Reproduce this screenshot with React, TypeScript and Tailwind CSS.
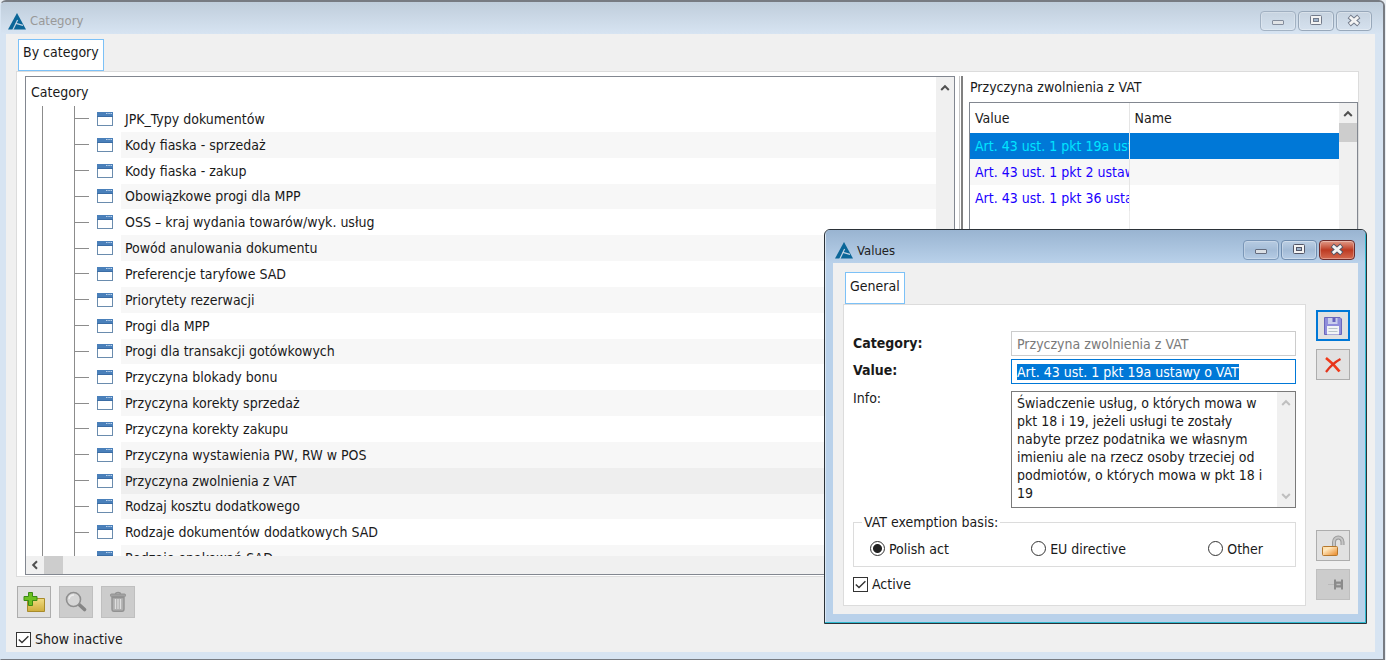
import React, { useEffect, useRef } from 'react';

const categories = [
  'JPK_Typy dokumentów',
  'Kody fiaska - sprzedaż',
  'Kody fiaska - zakup',
  'Obowiązkowe progi dla MPP',
  'OSS – kraj wydania towarów/wyk. usług',
  'Powód anulowania dokumentu',
  'Preferencje taryfowe SAD',
  'Priorytety rezerwacji',
  'Progi dla MPP',
  'Progi dla transakcji gotówkowych',
  'Przyczyna blokady bonu',
  'Przyczyna korekty sprzedaż',
  'Przyczyna korekty zakupu',
  'Przyczyna wystawienia PW, RW w POS',
  'Przyczyna zwolnienia z VAT',
  'Rodzaj kosztu dodatkowego',
  'Rodzaje dokumentów dodatkowych SAD',
  'Rodzaje opakowań SAD',
];

const values = ['Art. 43 ust. 1 pkt 19a ustawy o VAT', 'Art. 43 ust. 1 pkt 2 ustawy o VAT', 'Art. 43 ust. 1 pkt 36 ustawy o VAT'];

const info =
  'Świadczenie usług, o których mowa w pkt 18 i 19, jeżeli usługi te zostały nabyte przez podatnika we własnym imieniu ale na rzecz osoby trzeciej od podmiotów, o których mowa w pkt 18 i 19';

const Logo = () => (
  <svg width="18" height="17" viewBox="0 0 18 17" className="shrink-0">
    <path d="M9 0 L18 16.5 H0 Z" fill="#0b6698" />
    <path d="M9.6 7 L4.8 17" stroke="#c3d4e4" strokeWidth="1.2" />
    <path d="M7.8 10.4 L15 12.4" stroke="#c3d4e4" strokeWidth="1.1" />
  </svg>
);

const Chevron: React.FC<{ dir: 'up' | 'down' | 'left'; color?: string }> = ({ dir, color = '#505050' }) => (
  <svg width="10" height="10" viewBox="0 0 10 10" fill="none" stroke={color} strokeWidth="2">
    {dir === 'up' && <path d="M1.2 7 L5 3.2 L8.8 7" />}
    {dir === 'down' && <path d="M1.2 3 L5 6.8 L8.8 3" />}
    {dir === 'left' && <path d="M7 1.2 L3.2 5 L7 8.8" />}
  </svg>
);

const CategoryIcon = () => (
  <svg width="16" height="14" viewBox="0 0 16 14" className="shrink-0">
    <rect x="0.5" y="0.5" width="15" height="13" fill="#fff" stroke="#6a8cae" />
    <rect x="0" y="0" width="16" height="5" fill="#4a80ba" />
    <path d="M9 1.5h1.5M11.3 1.5h1.5M13.5 1.5h1.5" stroke="#bcd3ec" />
    <path d="M0 4.5h16" stroke="#3b6da5" />
  </svg>
);

const WindowButtons: React.FC<{ active?: boolean }> = ({ active }) => {
  const base = active
    ? 'flex h-5 w-9 items-center justify-center rounded-sm border border-[#6f8cae] bg-linear-to-b from-[#bccfe4] via-[#a3bbd6] to-[#b6cce5] shadow-[inset_0_0_0_1px_#ffffff50]'
    : 'flex h-5 w-9 items-center justify-center rounded-sm border border-[#98a8ba] bg-linear-to-b from-[#c7d3e0] to-[#d5e1ee] shadow-[inset_0_0_0_1px_#ffffff50]';
  const close = active
    ? 'flex h-5 w-9 items-center justify-center rounded-sm border border-[#6d2c2c] bg-linear-to-b from-[#e09a88] via-[#bd3a22] to-[#d4694f] shadow-[inset_0_0_0_1px_#ffffff50]'
    : base;
  const stroke = active ? '#535666' : '#727a8a';
  return (
    <div className="flex gap-[2px]">
      <button aria-label="Minimize" className={`${base} opacity-80`}>
        <svg width="14" height="14" viewBox="0 0 14 14">
          <rect x="1.5" y="6.5" width="11" height="4" rx="0.5" fill="#e6e6e6" stroke={stroke} />
        </svg>
      </button>
      <button aria-label="Restore" className={base}>
        <svg width="14" height="14" viewBox="0 0 14 14">
          <rect x="1.5" y="1.5" width="11" height="9" rx="1" fill="#f3f3f3" stroke={stroke} />
          <rect x="4.5" y="4.5" width="5" height="3" fill="#9fb4cc" stroke={stroke} />
        </svg>
      </button>
      <button aria-label="Close" className={close}>
        <svg width="14" height="14" viewBox="0 0 14 14" fill="none">
          <path d="M2.2 2.4 L11.8 10.6 M11.8 2.4 L2.2 10.6" stroke={stroke} strokeWidth="4.8" />
          <path d="M2.8 2.9 L11.2 10.1 M11.2 2.9 L2.8 10.1" stroke="#f3f3f3" strokeWidth="2.8" />
        </svg>
      </button>
    </div>
  );
};

const Checkbox: React.FC<{ id: string; label: string }> = ({ id, label }) => (
  <div className="flex items-center gap-1">
    <span className="grid size-[15px] place-items-center">
      <input id={id} type="checkbox" defaultChecked className="peer col-start-1 row-start-1 size-[15px] appearance-none border border-[#333] bg-white" />
      <svg width="15" height="15" viewBox="0 0 15 15" fill="none" className="pointer-events-none invisible col-start-1 row-start-1 peer-checked:visible">
        <path d="M2.8 7.4 L6 10.6 L12.4 4.2" stroke="#333" strokeWidth="1.4" />
      </svg>
    </span>
    <label htmlFor={id}>{label}</label>
  </div>
);

const Radio: React.FC<{ id: string; label: string; checked?: boolean }> = ({ id, label, checked }) => (
  <div className="flex items-center gap-1">
    <input
      id={id}
      type="radio"
      name="basis"
      defaultChecked={checked}
      className="size-[15px] appearance-none rounded-full border border-[#333] bg-white checked:bg-[radial-gradient(circle,#222_4px,#fff_5px)]"
    />
    <label htmlFor={id}>{label}</label>
  </div>
);

const toolButton = 'flex items-center justify-center border border-[#adadad] bg-[#e1e1e1]';
const toolButtonOff = 'flex items-center justify-center border border-[#bfbfbf] bg-[#cccccc]';

const CategoryTree = () => (
  <div className="flex min-w-0 flex-1 flex-col overflow-hidden border border-[#828790] bg-white">
    <div className="flex min-h-0 flex-1">
      <div className="flex min-w-0 flex-1 flex-col overflow-hidden">
        <div className="flex h-[29px] shrink-0 items-center px-[5px]">Category</div>
        <div className="min-h-0 flex-1 overflow-hidden">
          <ul className="ml-4 grid h-[465px] auto-rows-fr border-l border-[#8c8c8c]">
            {categories.map((name, i) => (
              <li key={name} className="ml-[31px] flex items-center border-l border-[#8c8c8c]">
                <span className="mr-2 h-px w-[14px] shrink-0 bg-[#8c8c8c]"></span>
                <CategoryIcon />
                <span
                  className={
                    name === 'Przyczyna zwolnienia z VAT'
                      ? 'ml-2 flex flex-1 items-center self-stretch bg-[#eeeeee] pl-1'
                      : i % 2
                        ? 'ml-2 flex flex-1 items-center self-stretch bg-[#f7f7f7] pl-1'
                        : 'ml-2 flex flex-1 items-center self-stretch pl-1'
                  }
                >
                  {name}
                </span>
              </li>
            ))}
          </ul>
        </div>
      </div>
      <div className="flex w-[18px] shrink-0 flex-col items-center bg-[#f0f0f0] pt-[6px]">
        <Chevron dir="up" />
      </div>
    </div>
    <div className="flex h-[18px] shrink-0 items-center bg-[#f0f0f0] pl-1">
      <Chevron dir="left" />
      <span className="ml-1 h-full w-[19px] bg-[#cdcdcd]"></span>
    </div>
  </div>
);

const ValuesTable = () => (
  <div className="flex min-h-0 w-[389px] shrink-0 flex-col">
    <h2 className="flex h-[26px] shrink-0 items-center px-px pb-1">Przyczyna zwolnienia z VAT</h2>
    <div className="flex min-h-0 flex-1 overflow-hidden border border-[#828790] bg-white">
      <div className="min-w-0 flex-1 overflow-hidden">
        <table className="w-full table-fixed border-collapse">
          <thead>
            <tr className="h-[30px]">
              <th className="w-[159px] border-r border-[#e5e5e5] px-[5px] text-left font-normal">Value</th>
              <th className="px-[5px] text-left font-normal">Name</th>
            </tr>
          </thead>
          <tbody>
            {values.map((v, i) => (
              <tr key={v} className={i === 0 ? 'h-[26px] bg-[#0078d7] text-[#00e5ff]' : i === 1 ? 'h-[26px] bg-[#f7f7f7] text-[#1a00ff]' : 'h-[26px] text-[#1a00ff]'}>
                <td className="overflow-hidden border-r border-[#e5e5e5] pl-[5px] whitespace-nowrap">{v}</td>
                <td></td>
              </tr>
            ))}
            <tr className="h-[360px]">
              <td className="border-r border-[#ececec]"></td>
              <td></td>
            </tr>
          </tbody>
        </table>
      </div>
      <div className="flex w-[18px] shrink-0 flex-col items-center bg-[#f0f0f0] pt-[6px]">
        <Chevron dir="up" />
        <span className="mt-1 h-[19px] w-full bg-[#cdcdcd]"></span>
      </div>
    </div>
  </div>
);

const ValuesDialog = () => {
  const valueRef = useRef<HTMLInputElement>(null);

  useEffect(() => {
    valueRef.current?.focus();
    valueRef.current?.select();
  }, []);

  return (
    <section
      role="dialog"
      aria-label="Values"
      className="absolute top-[229px] right-[19px] w-[543px] rounded-t-md border border-[#2b3238] bg-[#b9d1ea] px-2 pb-[9px] shadow-[inset_-1px_-1px_0_#2fb9cf,inset_1px_1px_0_#dbe8f5]"
    >
      <header className="-mx-[7px] flex h-[33px] items-center justify-between rounded-t bg-linear-to-b from-[#99b4d1] to-[#b9d1ea] pr-[10px] pl-[9px]">
        <div className="flex items-center gap-1 pt-2">
          <Logo />
          <span className="text-[13px] text-[#222]">Values</span>
        </div>
        <div className="pt-[6px]">
          <WindowButtons active />
        </div>
      </header>
      <div className="flex gap-[10px] bg-[#f0f0f0] pt-[9px] pr-2 pb-2 pl-[10px]">
        <div className="min-w-0 flex-1">
          <button className="ml-[2px] flex h-8 items-start border border-[#7cc1f7] bg-white px-1 pt-1">General</button>
          <form className="border border-[#dcdcdc] bg-white px-[9px] pt-[26px] pb-3">
            <div className="grid grid-cols-[158px_1fr]">
              <label htmlFor="category" className="pt-[3px] font-bold">Category:</label>
              <input id="category" readOnly defaultValue="Przyczyna zwolnienia z VAT" className="mb-[3px] h-[25px] min-w-0 border border-[#cccccc] bg-white px-[5px] text-[#7a7a7a] outline-none" />
              <label htmlFor="value" className="pt-[2px] font-bold">Value:</label>
              <input
                id="value"
                ref={valueRef}
                defaultValue="Art. 43 ust. 1 pkt 19a ustawy o VAT"
                className="mb-[7px] h-[25px] min-w-0 border border-[#0078d7] bg-white px-[5px] outline-none selection:bg-[#0078d7] selection:text-white"
              />
              <label htmlFor="info" className="-mt-[2px]">Info:</label>
              <div className="flex h-[117px] border border-[#7a7a7a]">
                <textarea id="info" defaultValue={info} className="min-w-0 flex-1 resize-none overflow-hidden bg-white pt-[2px] pl-[5px] leading-[18px] outline-none" />
                <div className="flex w-[18px] flex-col items-center justify-between bg-[#f0f0f0] py-[6px]">
                  <Chevron dir="up" color="#bfbfbf" />
                  <Chevron dir="down" color="#bfbfbf" />
                </div>
              </div>
            </div>
            <fieldset className="mt-[5px] flex h-[54px] items-center justify-between border border-[#dcdcdc] pr-8 pl-4">
              <legend className="-ml-2 px-[2px]">VAT exemption basis:</legend>
              <Radio id="polish" label="Polish act" checked />
              <Radio id="eu" label="EU directive" />
              <Radio id="other" label="Other" />
            </fieldset>
            <div className="mt-2">
              <Checkbox id="active" label="Active" />
            </div>
          </form>
        </div>
        <div className="flex flex-col gap-2 pt-[38px]">
          <button aria-label="Save" className="flex h-[31px] w-[34px] items-center justify-center border-2 border-[#0078d7] bg-[#e1e1e1]">
            <svg width="18" height="18" viewBox="0 0 18 18">
              <path d="M0.5 0.5 H16 L17.5 2 V17.5 H0.5 Z" fill="#8f8ddb" stroke="#6a67bc" />
              <rect x="4" y="1" width="9.5" height="6" fill="#c9cdec" />
              <rect x="8.5" y="1" width="3" height="4" fill="#6562bd" />
              <rect x="3" y="9" width="12" height="8.5" fill="#f2f4f6" />
              <path d="M4.5 11.5h9M4.5 14.5h9" stroke="#b8c3c8" />
            </svg>
          </button>
          <button aria-label="Delete" className={`${toolButton} h-[31px] w-[34px]`}>
            <svg width="18" height="18" viewBox="0 0 18 18" fill="none">
              <path d="M2 2 C6 5 12 11 15.5 15.5" stroke="#f03a1a" strokeWidth="2.8" />
              <path d="M16.5 3 C11 6 6 10.5 2 16" stroke="#e3331c" strokeWidth="2.2" />
            </svg>
          </button>
          <button aria-label="Unlock" className={`${toolButton} mt-auto h-[31px] w-[34px]`}>
            <svg width="24" height="22" viewBox="0 0 24 22" fill="none">
              <defs>
                <linearGradient id="lock" x1="0" x2="1" y1="0" y2="1">
                  <stop offset="0" stopColor="#fbd9a0" />
                  <stop offset="0.3" stopColor="#ffe7bd" />
                  <stop offset="1" stopColor="#e88420" />
                </linearGradient>
              </defs>
              <path d="M13 11 V7 C13 1 21.5 1 21.5 7 V10" stroke="#9a9a9a" strokeWidth="4" />
              <path d="M13 11 V7 C13 1 21.5 1 21.5 7 V10" stroke="#c6c6c6" strokeWidth="2" />
              <rect x="1.5" y="11.5" width="15" height="9" rx="1" fill="url(#lock)" stroke="#b5772c" />
            </svg>
          </button>
          <button aria-label="Pin" disabled className={`${toolButtonOff} mb-[6px] h-[31px] w-[34px]`}>
            <svg width="20" height="14" viewBox="0 0 20 14" className="ml-2">
              <path d="M1 6.5h6" stroke="#bababa" />
              <path d="M7 1.5h2v2h5v-2h2v10h-2v-2h-5v2h-2z" fill="#8b8b8b" />
              <path d="M9.5 6.5h4" stroke="#c2c2c2" strokeWidth="1.5" />
            </svg>
          </button>
        </div>
      </div>
    </section>
  );
};

const App: React.FC = () => (
  <main className='relative flex h-screen flex-col overflow-hidden bg-[#e8edf2] pr-px font-["DejaVu_Sans_Condensed","DejaVu_Sans",sans-serif] text-[14px] leading-[18px] text-[#1a1a1a]'>
    <div className="flex min-h-0 flex-1 flex-col rounded-t-md border border-t-2 border-r-2 border-[#777b82] border-l-[#d7e4f2] bg-[#d7e4f2] pr-2 pb-[7px] pl-[5px]">
      <header className="-mr-2 -ml-[5px] flex h-8 shrink-0 items-center justify-between rounded-t bg-linear-to-b from-[#bfcddb] to-[#d7e4f2] pr-[11px] pl-[7px]">
        <div className="flex items-center gap-1 pt-[6px]">
          <Logo />
          <h1 className="text-[13px] text-[#999]">Category</h1>
        </div>
        <div className="pt-[6px]">
          <WindowButtons />
        </div>
      </header>
      <div className="flex min-h-0 flex-1 flex-col bg-[#f0f0f0] pt-[5px] pr-4 pb-1 pl-[10px]">
        <button className="ml-[2px] flex h-8 w-fit shrink-0 items-start border border-[#7cc1f7] bg-white px-1 pt-[3px]">By category</button>
        <div className="flex min-h-0 flex-1 border border-[#dcdcdc] bg-white pt-1 pb-px pl-2">
          <CategoryTree />
          <div className="mr-[6px] ml-1 w-1 shrink-0 border-r-2 border-l border-r-[#808080] border-l-[#c8c8c8] bg-white"></div>
          <ValuesTable />
        </div>
        <div className="mt-[9px] ml-px flex shrink-0 gap-2">
          <button aria-label="Add category" className={`${toolButton} h-8 w-[34px]`}>
            <svg width="22" height="22" viewBox="0 0 22 22">
              <defs>
                <linearGradient id="folder" x1="0" x2="0" y1="0" y2="1">
                  <stop offset="0" stopColor="#f0dc82" />
                  <stop offset="1" stopColor="#cfae3c" />
                </linearGradient>
              </defs>
              <path d="M4.5 20.5 V9.5 H12 L13.5 7.5 H21.5 V20.5 Z" fill="url(#folder)" stroke="#a88b2b" />
              <path d="M5.5 1.5 h4 v4 h4.5 v4 h-4.5 v5 h-4 v-5 h-4.5 v-4 h4.5 z" fill="#6cc021" stroke="#3b8a15" />
            </svg>
          </button>
          <button aria-label="Preview" disabled className={`${toolButtonOff} h-8 w-[34px]`}>
            <svg width="22" height="22" viewBox="0 0 22 22" fill="none">
              <path d="M13.5 13 L19.5 18.5" stroke="#858585" strokeWidth="3.6" strokeLinecap="round" />
              <circle cx="8.5" cy="8.5" r="7" fill="#d6d6d6" stroke="#8f8f8f" strokeWidth="1.6" />
              <path d="M4 8 C4.5 5.5 6.5 4 9 4" stroke="#ededed" strokeWidth="1.4" />
            </svg>
          </button>
          <button aria-label="Remove" disabled className={`${toolButtonOff} h-8 w-[34px]`}>
            <svg width="18" height="22" viewBox="0 0 18 22" fill="none">
              <path d="M6.5 3 C6.5 1 11.5 1 11.5 3" stroke="#939393" strokeWidth="1.4" />
              <rect x="1.5" y="3" width="15" height="2.6" rx="1" fill="#a2a2a2" stroke="#929292" />
              <path d="M3 6.5 H15 V18 C15 19.5 14.5 20.3 13 20.3 H5 C3.5 20.3 3 19.5 3 18 Z" fill="#b0b0b0" stroke="#929292" strokeWidth="1.4" />
              <path d="M6.5 8 V18 M9 8 V18 M11.5 8 V18" stroke="#dedede" strokeWidth="1.3" />
            </svg>
          </button>
        </div>
        <div className="mt-3 shrink-0">
          <Checkbox id="inactive" label="Show inactive" />
        </div>
      </div>
    </div>
    <ValuesDialog />
  </main>
);

export default App;
